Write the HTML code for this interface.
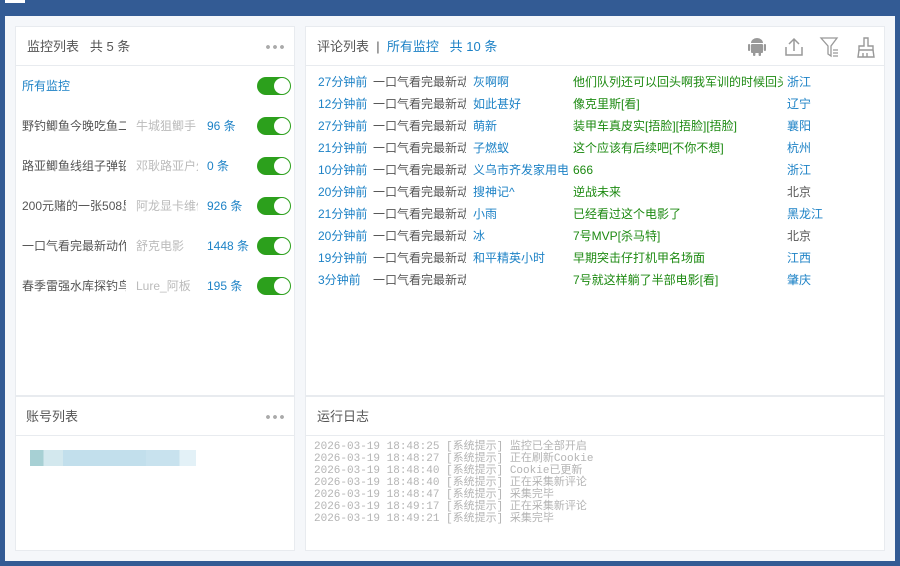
<!DOCTYPE html>
<html><head><meta charset="utf-8"><style>
*{margin:0;padding:0;box-sizing:border-box}
body{width:900px;height:566px;background:#335b94;position:relative;overflow:hidden;font-family:"Liberation Sans","Noto Sans CJK SC",sans-serif;font-size:12px}
.in{position:absolute;left:5px;top:16px;width:890px;height:545px;background:#f5f7fa}
.p{position:absolute;background:#fff;border:1px solid #e8ebef}
.hd{position:absolute;left:0;right:0;top:0;height:39px;border-bottom:1px solid #e8ebef}
.t{position:absolute;white-space:nowrap;overflow:hidden;line-height:16px}
.h{font-size:13px}
.dots{position:absolute;width:18px;height:4px;background:radial-gradient(circle at 2px 2px,#aaa 1.8px,transparent 2px) 0 0/7px 4px repeat-x}
.tg{position:absolute;left:241px;width:34px;height:18px;border-radius:9px;background:#2ca01c}
.tg:after{content:"";position:absolute;right:1px;top:1px;width:16px;height:16px;border-radius:8px;background:#fff}
.blue{color:#1d82c6}.gray{color:#555}.lg{color:#bbb}.green{color:#1d8a12}
.log{position:absolute;left:8px;top:4px;font-family:"Liberation Mono","Noto Sans CJK SC",monospace;font-size:11px;line-height:12px;color:#b4b4b4;white-space:pre}
</style></head><body>
<div style="position:absolute;left:5px;top:0;width:20px;height:3px;background:#fff"></div>
<div class="in"></div>
<div class="p" style="left:15px;top:26px;width:280px;height:370px">
 <div class="hd"></div>
 <div class="t gray h" style="left:11px;top:12px">监控列表 &nbsp; 共 5 条</div>
 <div class="dots" style="left:250px;top:18px"></div>
 <div class="t blue" style="left:6px;top:51px">所有监控</div><div class="tg" style="top:50px"></div>
 <div class="t gray" style="left:6px;top:91px;width:104px">野钓鲫鱼今晚吃鱼二</div><div class="t lg" style="left:120px;top:91px;width:62px">牛城狙鲫手</div><div class="t blue" style="left:191px;top:91px">96 条</div><div class="tg" style="top:90px"></div>
 <div class="t gray" style="left:6px;top:131px;width:104px">路亚鲫鱼线组子弹铅</div><div class="t lg" style="left:120px;top:131px;width:62px">邓耿路亚户外</div><div class="t blue" style="left:191px;top:131px">0 条</div><div class="tg" style="top:130px"></div>
 <div class="t gray" style="left:6px;top:171px;width:104px">200元赌的一张508显卡</div><div class="t lg" style="left:120px;top:171px;width:62px">阿龙显卡维修</div><div class="t blue" style="left:191px;top:171px">926 条</div><div class="tg" style="top:170px"></div>
 <div class="t gray" style="left:6px;top:211px;width:104px">一口气看完最新动作片</div><div class="t lg" style="left:120px;top:211px;width:62px">舒克电影</div><div class="t blue" style="left:191px;top:211px">1448 条</div><div class="tg" style="top:210px"></div>
 <div class="t gray" style="left:6px;top:251px;width:104px">春季雷强水库探钓鸟</div><div class="t lg" style="left:120px;top:251px;width:62px">Lure_阿板</div><div class="t blue" style="left:191px;top:251px">195 条</div><div class="tg" style="top:250px"></div>
</div>
<div class="p" style="left:15px;top:396px;width:280px;height:155px">
 <div class="hd"></div>
 <div class="t gray h" style="left:10px;top:12px">账号列表</div>
 <div class="dots" style="left:250px;top:18px"></div>
 <div style="position:absolute;left:14px;top:53px;width:166px;height:16px;background:linear-gradient(90deg,#a7d0d4 0 8%,#d3e8ee 8% 20%,#c2dfec 20% 70%,#c8e2ee 70% 90%,#e3f1f7 90%)"></div>
</div>
<div class="p" style="left:305px;top:26px;width:580px;height:370px">
 <div class="hd"></div>
 <div class="t gray h" style="left:11px;top:12px">评论列表 &nbsp;| &nbsp;<span class="blue">所有监控 &nbsp; 共 10 条</span></div>
 <svg style="position:absolute;left:442px;top:10px" width="18" height="20" viewBox="0 0 18 20" fill="#999"><rect x="3" y="7" width="12" height="9" rx="1"/><path d="M3 6a6 5 0 0 1 12 0z"/><rect x="0" y="7" width="2.2" height="7" rx="1"/><rect x="15.8" y="7" width="2.2" height="7" rx="1"/><rect x="5" y="15" width="2.4" height="4" rx="1"/><rect x="10.6" y="15" width="2.4" height="4" rx="1"/></svg>
 <svg style="position:absolute;left:478px;top:10px" width="20" height="20" viewBox="0 0 20 20" fill="none" stroke="#999" stroke-width="1.5"><path d="M2 10v8h16v-8M10 14V2M5 7l5-5 5 5"/></svg>
 <svg style="position:absolute;left:513px;top:9px" width="22" height="22" viewBox="0 0 22 22" fill="none" stroke="#999" stroke-width="1.3"><path d="M2 2h16l-6 8v10l-3-2v-8z"/><path d="M14 14h5M14 17h5M14 20h5"/></svg>
 <svg style="position:absolute;left:550px;top:9px" width="20" height="22" viewBox="0 0 20 22" fill="none" stroke="#999" stroke-width="1.4"><path d="M8 2h4v8h5v4H3v-4h5z"/><path d="M3 14l-1 7h16l-1-7M7 17v4M11 17v4"/></svg>
</div>
<div style="position:absolute;left:318px;top:71px;line-height:22px;white-space:nowrap">
 <div class="t blue" style="left:0;top:0;width:54px;line-height:22px">27分钟前<br>12分钟前<br>27分钟前<br>21分钟前<br>10分钟前<br>20分钟前<br>21分钟前<br>20分钟前<br>19分钟前<br>3分钟前</div>
 <div class="t gray" style="left:55px;top:0;width:93px;line-height:22px">一口气看完最新动作<br>一口气看完最新动作<br>一口气看完最新动作<br>一口气看完最新动作<br>一口气看完最新动作<br>一口气看完最新动作<br>一口气看完最新动作<br>一口气看完最新动作<br>一口气看完最新动作<br>一口气看完最新动作</div>
 <div class="t blue" style="left:155px;top:0;width:95px;line-height:22px">灰啊啊<br>如此甚好<br>萌新<br>子燃蚁<br>义乌市齐发家用电器<br>搜神记^<br>小雨<br>冰<br>和平精英小时<br>&nbsp;</div>
 <div class="t green" style="left:255px;top:0;width:210px;line-height:22px">他们队列还可以回头啊我军训的时候回头<br>像克里斯[看]<br>装甲车真皮实[捂脸][捂脸][捂脸]<br>这个应该有后续吧[不你不想]<br>666<br>逆战未来<br>已经看过这个电影了<br>7号MVP[杀马特]<br>早期突击仔打机甲名场面<br>7号就这样躺了半部电影[看]</div>
 <div class="t" style="left:469px;top:0;line-height:22px;color:#1d82c6">浙江<br>辽宁<br>襄阳<br>杭州<br>浙江<br><span class="gray">北京</span><br>黑龙江<br><span class="gray">北京</span><br>江西<br>肇庆</div>
</div>
<div class="p" style="left:305px;top:396px;width:580px;height:155px">
 <div class="hd"></div>
 <div class="t gray h" style="left:11px;top:12px">运行日志</div>
 <div class="log" style="top:44px">2026-03-19 18:48:25 [系统提示] 监控已全部开启
2026-03-19 18:48:27 [系统提示] 正在刷新Cookie
2026-03-19 18:48:40 [系统提示] Cookie已更新
2026-03-19 18:48:40 [系统提示] 正在采集新评论
2026-03-19 18:48:47 [系统提示] 采集完毕
2026-03-19 18:49:17 [系统提示] 正在采集新评论
2026-03-19 18:49:21 [系统提示] 采集完毕</div>
</div>
</body></html>
